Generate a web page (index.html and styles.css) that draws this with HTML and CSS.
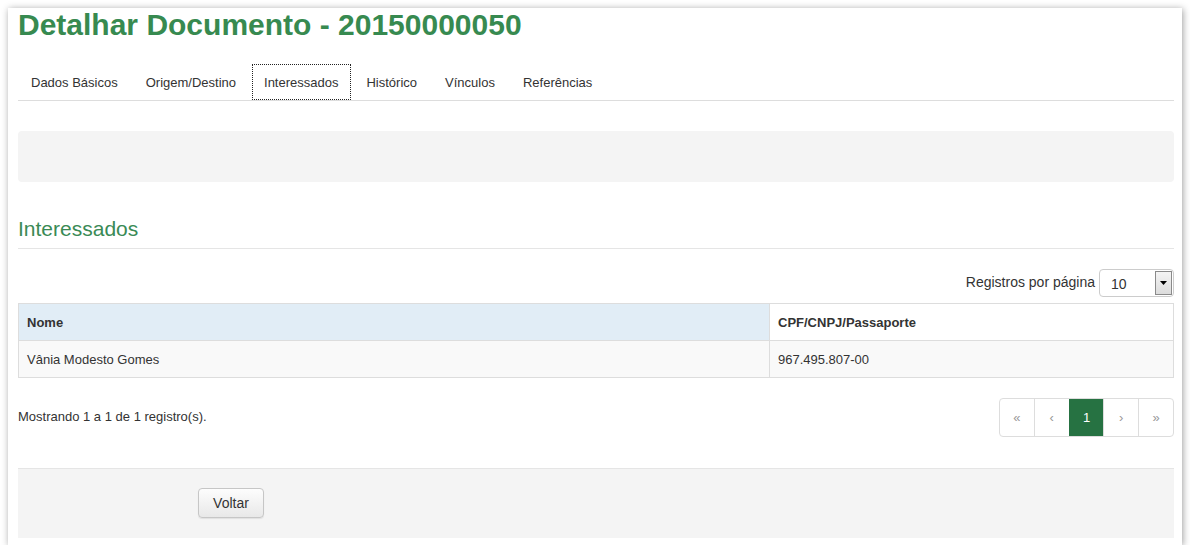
FILE: index.html
```html
<!DOCTYPE html>
<html lang="pt-BR">
<head>
<meta charset="utf-8">
<title>Detalhar Documento</title>
<link rel="stylesheet" href="styles.css">
</head>
<body>
<div class="panel">
  <h1 class="title">Detalhar Documento - 20150000050</h1>
  <ul class="tabs">
    <li class="tab">Dados Básicos</li>
    <li class="tab">Origem/Destino</li>
    <li class="tab active">Interessados</li>
    <li class="tab">Histórico</li>
    <li class="tab">Vínculos</li>
    <li class="tab">Referências</li>
  </ul>
  <div class="well"></div>
  <h2 class="section-title">Interessados</h2>
  <div class="length">
    <span class="length-label">Registros por página</span>
    <span class="select"><span class="select-value">10</span><span class="select-arrow"><svg width="7" height="4" viewBox="0 0 7 4"><path d="M0 0H7L3.5 4Z" fill="#000"/></svg></span></span>
  </div>
  <table class="grid">
    <thead>
      <tr><th class="sorted">Nome</th><th>CPF/CNPJ/Passaporte</th></tr>
    </thead>
    <tbody>
      <tr><td>Vânia Modesto Gomes</td><td>967.495.807-00</td></tr>
    </tbody>
  </table>
  <div class="table-foot">
    <span class="info">Mostrando 1 a 1 de 1 registro(s).</span>
    <ul class="pagination">
      <li class="page">«</li>
      <li class="page">‹</li>
      <li class="page current">1</li>
      <li class="page">›</li>
      <li class="page">»</li>
    </ul>
  </div>
  <div class="actions">
    <button class="btn" type="button">Voltar</button>
  </div>
</div>
</body>
</html>
```

FILE: styles.css
```css
* { box-sizing: border-box; }
html, body { margin: 0; padding: 0; background: #fff; }
body {
  font-family: "Liberation Sans", Arial, sans-serif;
  color: #333;
  font-size: 13px;
}
.panel {
  margin: 8px 0 0 8px;
  width: 1174px;
  height: 537px;
  background: #fff;
  box-shadow: 1px 1px 7px rgba(0,0,0,0.38);
  padding: 0 8px 0 10px;
}
.title {
  margin: 0;
  font-size: 30px;
  line-height: 33px;
  font-weight: bold;
  color: #378a50;
}
.tabs {
  list-style: none;
  margin: 23px 0 0 0;
  padding: 0;
  display: flex;
  border-bottom: 1px solid #ddd;
}
.tab {
  height: 36px;
  line-height: 34px;
  padding: 1px 12px 0 11px;
  margin-right: 3px;
  border: 1px dotted transparent;
  font-size: 13px;
  color: #333;
}
.tab:first-child { margin-left: 1px; }
.tab.active {
  border-color: #222;
}
.well {
  margin-top: 30px;
  height: 51px;
  background: #f4f4f4;
  border-radius: 4px;
}
.section-title {
  margin: 34px 0 0 0;
  font-size: 21px;
  font-weight: normal;
  line-height: 25px;
  color: #3a8a55;
  padding-bottom: 7px;
  border-bottom: 1px solid #e5e5e5;
}
.length {
  margin-top: 20px;
  display: flex;
  justify-content: flex-end;
  align-items: center;
  height: 28px;
}
.length-label {
  font-size: 14px;
  margin-right: 4px;
  margin-top: -2px;
}
.select {
  width: 75px;
  height: 28px;
  border: 1px solid #ccc;
  border-radius: 4px;
  display: flex;
  align-items: center;
  justify-content: space-between;
  padding: 1px 1px 1px 11px;
  background: #fff;
}
.select-value { font-size: 14px; padding-top: 2px; }
.select-arrow {
  width: 17px;
  height: 24px;
  border: 1px solid #8a8a8a;
  background: linear-gradient(#f4f4f4, #dcdcdc);
  display: flex;
  align-items: center;
  justify-content: center;
}
.grid {
  margin-top: 6px;
  width: 100%;
  border-collapse: collapse;
  font-size: 13px;
}
.grid th, .grid td {
  border: 1px solid #ddd;
  height: 37px;
  padding: 0 8px;
  text-align: left;
}
.grid th { font-weight: bold; background: #fff; }
.grid th.sorted { background: #e1edf6; width: 751px; }
.grid td { background: #f9f9f9; }
.table-foot {
  margin-top: 20px;
  display: flex;
  justify-content: space-between;
  align-items: center;
}
.info { font-size: 13px; margin-top: -2px; }
.pagination {
  list-style: none;
  margin: 0;
  padding: 0;
  display: flex;
  border: 1px solid #ddd;
  border-radius: 4px;
  overflow: hidden;
  width: 175px;
  height: 39px;
}
.page {
  flex: 1;
  display: flex;
  align-items: center;
  justify-content: center;
  color: #999;
  font-size: 13px;
  border-left: 1px solid #ddd;
}
.page:first-child { border-left: none; }
.page.current {
  background: #267242;
  color: #fff;
  border-left-color: #267242;
}
.actions {
  margin-top: 31px;
  border-top: 1px solid #e5e5e5;
  background: #f4f4f4;
  height: 70px;
  padding: 19px 0 0 180px;
}
.btn {
  font-family: "Liberation Sans", Arial, sans-serif;
  width: 66px;
  height: 30px;
  font-size: 14px;
  color: #333;
  border: 1px solid #c6c6c6;
  border-radius: 4px;
  background: linear-gradient(#fdfdfd, #e8e8e8);
  box-shadow: 0 1px 1px rgba(0,0,0,0.08);
  padding: 0;
}
```
